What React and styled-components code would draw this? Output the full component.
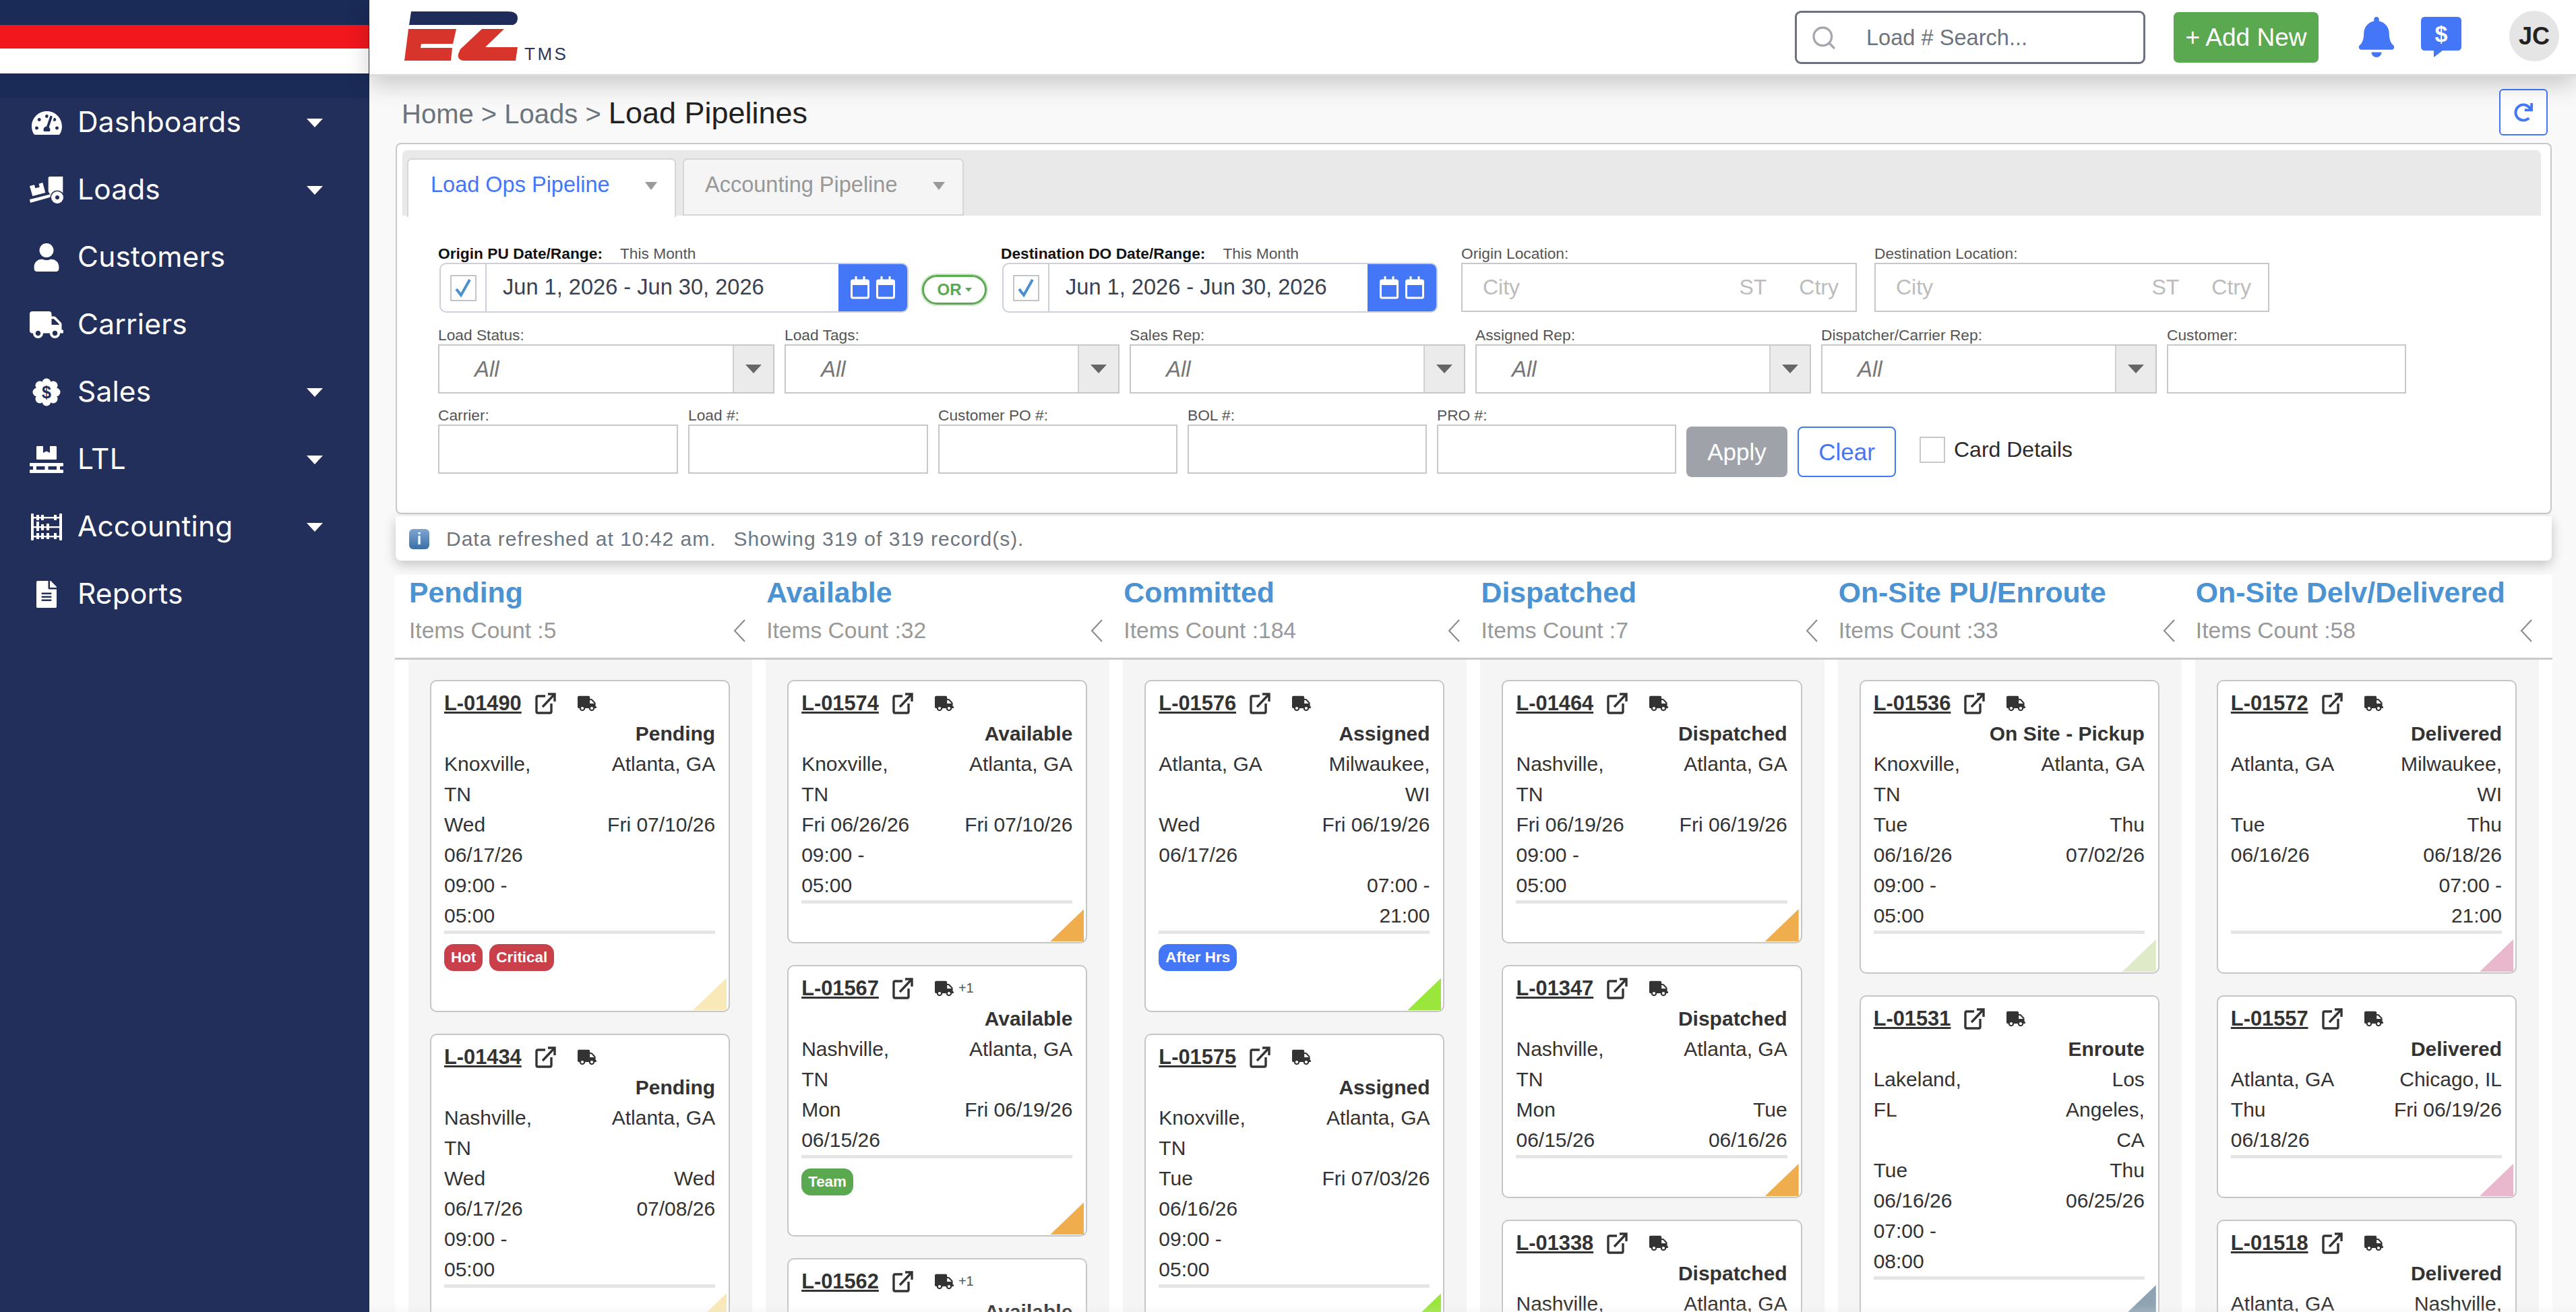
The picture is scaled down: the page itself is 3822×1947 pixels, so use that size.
import React from 'react'
import styled, { createGlobalStyle } from 'styled-components'
import { FaTachometerAlt, FaUser, FaTruck, FaPallet, FaFileAlt, FaBell, FaRedo } from 'react-icons/fa'
import { Search } from 'lucide-react'

const BLUE = '#4477f7'
const SANS = '"Liberation Sans", Arial, sans-serif'

const Global = createGlobalStyle`
  html, body { margin: 0; padding: 0; background: #f9f9f9; }
  * { box-sizing: border-box; }
  body { font-family: ${SANS}; color: #333; }
`

const Shell = styled.div`
  display: grid;
  grid-template-columns: 548px 1fr;
  height: 100vh;
  overflow: hidden;
`

/* ---------- sidebar ---------- */
const Sidebar = styled.aside`
  background: #222f5b;
  color: #fff;
  font-family: Inter, sans-serif;
`
const Brand = styled.div`
  height: 146px;
  padding: 37px 1px 37px 0;
  background: #1a2b57;
`
const RedStripe = styled.div`
  height: 35px;
  background: #f1171d;
`
const WhiteStripe = styled.div`
  height: 37px;
  background: #fff;
`
const Menu = styled.nav`
  display: flex;
  flex-direction: column;
  gap: 28px;
`
const MenuItem = styled.div`
  height: 72px;
  display: flex;
  align-items: center;
  padding-left: 44px;
`
const MenuIcon = styled.span`
  width: 50px;
  height: 50px;
  display: flex;
  align-items: center;
  justify-content: center;
  margin-right: 21px;
`
const MenuLabel = styled.span`
  font-size: 42.4px;
  width: 340px;
  letter-spacing: 0.2px;
  padding-bottom: 4px;
`
const SideCaret = styled.span`
  width: 0;
  height: 0;
  border-left: 12px solid transparent;
  border-right: 12px solid transparent;
  border-top: 13px solid #fff;
`

const DollyIcon = () => (
  <svg width="50" height="40" viewBox="0 0 50 40">
    <path fill="#fff" fillRule="evenodd" d="M0 14L7 12.3L8.3 17.3L14.7 15.7L13.7 10.7L19.3 9L23.3 24L4.3 29Z" />
    <path fill="#fff" d="M0 34L31 26.3L32 30.3L1 39Z" />
    <path fill="#fff" d="M30 0H49.3V30H32L27.7 22V2.3Q27.7 0 30 0Z" />
    <circle cx="41" cy="31" r="10.5" fill="#222f5b" />
    <circle cx="41" cy="31" r="9" fill="#fff" />
    <circle cx="41" cy="31" r="3" fill="#222f5b" />
  </svg>
)

const SalesIcon = () => (
  <svg width="42" height="42" viewBox="0 0 42 42">
    <g fill="#fff">
      <circle cx="21" cy="21" r="15" />
      <circle cx="21" cy="7" r="6.5" />
      <circle cx="21" cy="35" r="6.5" />
      <circle cx="7" cy="21" r="6.5" />
      <circle cx="35" cy="21" r="6.5" />
      <circle cx="11" cy="11" r="6.5" />
      <circle cx="31" cy="11" r="6.5" />
      <circle cx="11" cy="31" r="6.5" />
      <circle cx="31" cy="31" r="6.5" />
    </g>
    <text x="21" y="30" textAnchor="middle" fontSize="25" fontWeight="700" fontFamily={SANS} fill="#222f5b">$</text>
  </svg>
)

const AbacusIcon = () => (
  <svg width="46" height="40" viewBox="0 0 46 40" fill="#fff">
    <rect x="0" y="0" width="4" height="40" rx="1" />
    <rect x="42" y="0" width="4" height="40" rx="1" />
    <rect x="4" y="5" width="38" height="2.4" />
    <rect x="4" y="19" width="38" height="2.4" />
    <rect x="4" y="33" width="38" height="2.4" />
    <rect x="8" y="2" width="4" height="8" />
    <rect x="15" y="2" width="4" height="8" />
    <rect x="8" y="12" width="4" height="14" />
    <rect x="15" y="16" width="4" height="9" />
    <rect x="23" y="15" width="4" height="10" />
    <rect x="34" y="2" width="4" height="8" />
    <rect x="8" y="29" width="4" height="9" />
    <rect x="15" y="29" width="4" height="9" />
    <rect x="23" y="29" width="4" height="9" />
    <rect x="34" y="29" width="4" height="9" />
  </svg>
)

const MENU = [
  { label: 'Dashboards', icon: <FaTachometerAlt size={45} />, caret: true },
  { label: 'Loads', icon: <DollyIcon />, caret: true },
  { label: 'Customers', icon: <FaUser size={42} />, caret: false },
  { label: 'Carriers', icon: <FaTruck size={50} />, caret: false },
  { label: 'Sales', icon: <SalesIcon />, caret: true },
  { label: 'LTL', icon: <FaPallet size={50} />, caret: true },
  { label: 'Accounting', icon: <AbacusIcon />, caret: true },
  { label: 'Reports', icon: <FaFileAlt size={40} />, caret: false },
]

/* ---------- top bar ---------- */
const Main = styled.main`
  min-width: 0;
  display: flex;
  flex-direction: column;
  position: relative;
  background: #f9f9f9;
`
const Topbar = styled.header`
  height: 113px;
  flex: none;
  display: flex;
  align-items: flex-start;
  background: #fff;
  border-bottom: 3px solid #dcdcdc;
  box-shadow: 0 12px 34px rgba(0, 0, 0, 0.2);
  position: relative;
  z-index: 2;
`
const LogoWrap = styled.div`
  display: flex;
  align-items: flex-end;
  gap: 8px;
  margin: 17px 0 0 52px;
  height: 73px;
`
const LogoTms = styled.span`
  font-size: 26px;
  line-height: 20px;
  letter-spacing: 3.5px;
  color: #2a3660;
`
const SearchBox = styled.div`
  margin: 16px 0 0 auto;
  width: 520px;
  height: 79px;
  border: 3px solid #6c717b;
  border-radius: 9px;
  display: flex;
  align-items: center;
  padding-left: 20px;
  gap: 43px;
  font-size: 32.6px;
  color: #6c757d;
`
const AddButton = styled.div`
  margin: 18px 0 0 42px;
  width: 215px;
  height: 75px;
  background: #5aa84f;
  border-radius: 7px;
  color: #fff;
  font-size: 37px;
  display: flex;
  align-items: center;
  justify-content: center;
`
const BellWrap = styled.div`
  margin: 25px 0 0 56px;
  color: ${BLUE};
  height: 60px;
`
const MoneyWrap = styled.div`
  margin: 25px 0 0 36px;
  height: 60px;
`
const Avatar = styled.div`
  margin: 16px 25px 0 71px;
  width: 74px;
  height: 75px;
  border-radius: 50%;
  background: #e5e5e5;
  color: #222;
  font-weight: 700;
  font-size: 36px;
  display: flex;
  align-items: center;
  justify-content: center;
`

/* ---------- breadcrumb ---------- */
const CrumbRow = styled.div`
  flex: none;
  height: 99px;
  padding: 21px 42px 11px 48px;
  display: flex;
  align-items: center;
  justify-content: space-between;
`
const Crumbs = styled.div`
  font-size: 40px;
  color: #6c757d;
`
const CrumbCurrent = styled.span`
  font-size: 45px;
  color: #222;
`
const RefreshButton = styled.div`
  width: 72px;
  height: 69px;
  margin-top: -2px;
  border: 2px solid ${BLUE};
  border-radius: 6px;
  color: ${BLUE};
  background: #fff;
  display: flex;
  align-items: center;
  justify-content: center;
`

/* ---------- filter panel ---------- */
const Panel = styled.section`
  flex: none;
  margin: 0 36px 0 39px;
  height: 551px;
  background: #fff;
  border: 2px solid #c9c9c9;
  border-radius: 8px;
  padding: 9px 14px 0 8px;
`
const TabStrip = styled.div`
  height: 97px;
  background: #e9e9e9;
  border-radius: 7px 7px 0 0;
  padding: 12px 0 0 7px;
  display: flex;
  gap: 10px;
`
const Tab = styled.div`
  height: ${p => (p.$active ? 87 : 85)}px;
  width: ${p => (p.$active ? 399 : 417)}px;
  padding: 19px 26px 0 ${p => (p.$active ? 33 : 31)}px;
  background: ${p => (p.$active ? '#fff' : '#f5f5f5')};
  border: 2px solid #d6d6d6;
  border-bottom: ${p => (p.$active ? 'none' : '2px solid #d6d6d6')};
  border-radius: 7px 7px 0 0;
  font-size: 32.5px;
  color: ${p => (p.$active ? BLUE : '#989898')};
  display: flex;
  justify-content: space-between;
  align-items: flex-start;
`
const TabCaret = styled.span`
  margin-top: 14px;
  width: 0;
  height: 0;
  border-left: 9px solid transparent;
  border-right: 9px solid transparent;
  border-top: 12px solid #9a9a9a;
`
const FilterRow = styled.div`
  display: flex;
  align-items: flex-start;
  gap: ${p => p.$gap ?? 15}px;
  margin-top: ${p => p.$top}px;
  padding-left: 53px;
`
const Field = styled.div`
  width: ${p => p.$w}px;
  flex: none;
  margin-right: ${p => p.$after || 0}px;
`
const FieldLabel = styled.div`
  height: 27px;
  line-height: 27px;
  font-size: 22.75px;
  color: #555;
  white-space: nowrap;
`
const StrongLabel = styled.strong`
  color: #111;
  font-weight: 700;
  margin-right: 26px;
`
const DateBox = styled.div`
  height: 74px;
  margin-left: 2px;
  display: flex;
  border: 2px solid #ccd0d8;
  border-radius: 10px;
  overflow: hidden;
`
const DateCheckCell = styled.div`
  width: 68px;
  flex: none;
  display: flex;
  align-items: center;
  justify-content: center;
  border-right: 2px solid #ccd0d8;
`
const CheckSquare = styled.span`
  width: 39px;
  height: 39px;
  border: 2px solid #c4c4c4;
  display: flex;
  align-items: center;
  justify-content: center;
  background: #fff;
`
const DateText = styled.div`
  flex: 1;
  padding-left: 24px;
  font-size: 32.6px;
  line-height: 68px;
  color: #3a4252;
  white-space: nowrap;
`
const DateButton = styled.div`
  width: 102px;
  flex: none;
  background: ${BLUE};
  display: flex;
  align-items: center;
  justify-content: center;
`
const OrPill = styled.div`
  width: 96px;
  height: 44px;
  flex: none;
  margin: 45px 21px 0 20px;
  border: 3px solid #5aa84f;
  box-shadow: 0 0 0 2px #cfe5cb;
  border-radius: 22px;
  color: #5aa84f;
  font-size: 24px;
  font-weight: 700;
  display: flex;
  align-items: center;
  justify-content: center;
  gap: 5px;
`
const OrCaret = styled.span`
  width: 0;
  height: 0;
  border-left: 5px solid transparent;
  border-right: 5px solid transparent;
  border-top: 6px solid #5aa84f;
`
const InputBox = styled.div`
  height: 73px;
  border: 2px solid #c8c8c8;
  background: #fff;
  display: flex;
  align-items: center;
  font-size: ${p => (p.$select ? 33 : 32)}px;
`
const Placeholder = styled.span`
  color: #bcbcbc;
  flex: ${p => (p.$grow ? 1 : 'none')};
  margin-left: ${p => (p.$grow ? 30 : 48)}px;
`
const LocationEnd = styled.span`
  width: 25px;
  flex: none;
`
const SelectValue = styled.span`
  flex: 1;
  padding-left: 52px;
  font-style: italic;
  color: #777;
`
const SelectArrowCell = styled.span`
  width: 60px;
  height: 100%;
  flex: none;
  background: #ebebeb;
  border-left: 2px solid #d0d0d0;
  display: flex;
  align-items: center;
  justify-content: center;
`
const SelectArrow = styled.span`
  width: 0;
  height: 0;
  border-left: 12px solid transparent;
  border-right: 12px solid transparent;
  border-top: 13px solid #666;
`
const ApplyButton = styled.div`
  margin-top: 30px;
  width: 150px;
  height: 75px;
  border-radius: 8px;
  background: #9fa3a9;
  color: #fff;
  font-size: 35px;
  display: flex;
  align-items: center;
  justify-content: center;
`
const ClearButton = styled.div`
  margin-top: 30px;
  width: 146px;
  height: 75px;
  border-radius: 8px;
  border: 2px solid ${BLUE};
  color: ${BLUE};
  font-size: 35px;
  display: flex;
  align-items: center;
  justify-content: center;
`
const CardToggle = styled.div`
  margin: 45px 0 0 20px;
  display: flex;
  align-items: center;
  gap: 13px;
  font-size: 32px;
  color: #2b2b2b;
`
const EmptyBox = styled.span`
  width: 38px;
  height: 39px;
  border: 2px solid #c8c8c8;
`

/* ---------- status ---------- */
const StatusBar = styled.div`
  flex: none;
  margin: 3px 36px 21px 39px;
  height: 66px;
  background: #fff;
  border-radius: 0 0 8px 8px;
  box-shadow: 0 6px 18px rgba(0, 0, 0, 0.22);
  display: flex;
  align-items: center;
  padding: 2px 0 0 20px;
  gap: 25px;
  font-size: 30px;
  letter-spacing: 1px;
  color: #6d7680;
  position: relative;
`
const InfoIcon = styled.span`
  width: 30px;
  height: 30px;
  border-radius: 6px;
  background: linear-gradient(#7ea6d3, #3c6ea5);
  color: #fff;
  font-size: 23px;
  font-weight: 700;
  display: flex;
  align-items: center;
  justify-content: center;
  letter-spacing: 0;
`
const StatusGap = styled.span`
  margin-left: 26px;
`

/* ---------- board ---------- */
const Board = styled.section`
  flex: 1;
  min-height: 0;
  margin: 0 35px 0 38px;
  background: #fff;
  overflow: hidden;
  position: relative;
  z-index: 1;
`
const HeadRow = styled.div`
  display: grid;
  grid-template-columns: repeat(6, 1fr);
  gap: 20px;
  padding: 0 20px;
  border-bottom: 3px solid #c9c9c9;
  height: 126px;
`
const ColHead = styled.div`
  padding: 1px 0 0 1px;
`
const ColTitle = styled.div`
  font-size: 42.8px;
  line-height: 50px;
  font-weight: 700;
  color: #4b93d3;
  white-space: nowrap;
`
const ColCountRow = styled.div`
  margin-top: 12px;
  display: flex;
  justify-content: space-between;
  align-items: center;
  padding-right: 10px;
  font-size: 33.6px;
  line-height: 40px;
  color: #999;
`
const BodyRow = styled.div`
  display: grid;
  grid-template-columns: repeat(6, 1fr);
  gap: 20px;
  padding: 0 20px;
`
const ColBody = styled.div`
  background: #f5f5f5;
  padding: 30px 33px 0 32px;
  height: 1000px;
  display: flex;
  flex-direction: column;
  gap: 32px;
`
const Card = styled.article`
  position: relative;
  flex: none;
  background: #fff;
  border: 2px solid #c6c6c6;
  border-radius: 10px;
  padding: 10px 20px 0 19px;
  font-size: 30px;
  line-height: 45px;
  color: #333;
`
const CardTop = styled.div`
  height: 45px;
  display: flex;
  align-items: center;
`
const LoadId = styled.a`
  font-weight: 700;
  font-size: 30.8px;
  text-decoration: underline;
  color: #333;
  margin-right: 20px;
`
const TruckWrap = styled.span`
  display: flex;
  align-items: center;
  margin-left: 32px;
  color: #333;
`
const PlusOne = styled.span`
  font-size: 20px;
  color: #555;
  margin-left: 7px;
`
const CardStatus = styled.div`
  text-align: right;
  font-weight: 700;
`
const CardGrid = styled.div`
  display: grid;
  grid-template-columns: 165px 165px;
  justify-content: space-between;
`
const CellRight = styled.div`
  text-align: right;
`
const CardRule = styled.div`
  height: 5px;
  background: #e5e5e5;
`
const CardFoot = styled.div`
  display: flex;
  gap: 10px;
  height: ${p => (p.$tagged ? 114 : 57)}px;
  padding-top: 15px;
  align-items: flex-start;
`
const Tag = styled.span`
  height: 40px;
  padding: 0 10px;
  border-radius: 14px;
  background: ${p => p.$color};
  color: #fff;
  font-size: 22.4px;
  font-weight: 700;
  line-height: 40px;
`
const Corner = styled.span`
  position: absolute;
  right: 3px;
  bottom: 1px;
  width: 50px;
  height: 48px;
  background: ${p => p.$color};
  clip-path: polygon(100% 0, 100% 100%, 0 100%);
`
const BottomFade = styled.div`
  position: absolute;
  left: 0;
  right: 0;
  bottom: 0;
  height: 44px;
  background: linear-gradient(rgba(225, 225, 225, 0), rgba(225, 225, 225, 0.65));
  z-index: 3;
  pointer-events: none;
`

/* ---------- drawings ---------- */
const Logo = () => (
  <svg width="170" height="73" viewBox="0 0 170 73">
    <path d="M10 0H153Q168 0 168 10Q168 18 161 20H7Z" fill="#1f2c5a" />
    <path d="M6 26H77L72 48H25L24 54H71L69 73H0Z" fill="#d7352b" />
    <path d="M115 26H148L120 53H168L165 73H90Q78 73 80 63L83 56Z" fill="#d7352b" />
  </svg>
)

const MoneyChat = () => (
  <svg width="60" height="60" viewBox="0 0 60 60">
    <path d="M6 0H54Q60 0 60 6V44Q60 50 54 50H32L19 60V50H6Q0 50 0 44V6Q0 0 6 0Z" fill={BLUE} />
    <text x="30" y="37" textAnchor="middle" fontSize="34" fontWeight="700" fontFamily={SANS} fill="#fff">$</text>
  </svg>
)

const CheckMark = () => (
  <svg width="26" height="30" viewBox="0 0 26 30">
    <path d="M3 17L10 26L23 3" fill="none" stroke="#4a90d0" strokeWidth="4" />
  </svg>
)

const Calendars = () => (
  <svg width="66" height="34" viewBox="0 0 66 34" fill="none" stroke="#fff" strokeWidth="3">
    <rect x="1.5" y="6" width="25" height="26" rx="2" />
    <rect x="39.5" y="6" width="25" height="26" rx="2" />
    <path d="M2 10H26M40 10H64" strokeWidth="6" />
    <path d="M8 0V6M20 0V6M46 0V6M58 0V6" />
  </svg>
)

const ExternalLink = () => (
  <svg width="31" height="32" viewBox="0 0 31 32" fill="none" stroke="#333" strokeWidth="3.4">
    <path d="M15 5H4Q2 5 2 7V28Q2 30 4 30H22Q24 30 24 28V16" />
    <path d="M11 21L28 3" />
    <path d="M19 2H29V13" />
  </svg>
)

const Chevron = () => (
  <svg width="18" height="34" viewBox="0 0 18 34" fill="none" stroke="#888" strokeWidth="2">
    <path d="M17 1L2 17L17 33" />
  </svg>
)

/* ---------- data ---------- */
const YELLOW = '#f9e9b8'
const ORANGE = '#f0ad4e'
const LIME = '#9be63c'
const SAGE = '#dfeac8'
const SLATE = '#8fa3b3'
const PINK = '#eab8cc'
const RED = '#c9404a'

const COLUMNS = [
  {
    title: 'Pending', count: 5,
    cards: [
      { id: 'L-01490', status: 'Pending', corner: YELLOW, tags: [['Hot', RED], ['Critical', RED]],
        rows: [['Knoxville, TN', 'Atlanta, GA'], ['Wed 06/17/26', 'Fri 07/10/26'], ['09:00 - 05:00', '']] },
      { id: 'L-01434', status: 'Pending', corner: YELLOW,
        rows: [['Nashville, TN', 'Atlanta, GA'], ['Wed 06/17/26', 'Wed 07/08/26'], ['09:00 - 05:00', '']] },
    ],
  },
  {
    title: 'Available', count: 32,
    cards: [
      { id: 'L-01574', status: 'Available', corner: ORANGE,
        rows: [['Knoxville, TN', 'Atlanta, GA'], ['Fri 06/26/26', 'Fri 07/10/26'], ['09:00 - 05:00', '']] },
      { id: 'L-01567', plus: true, status: 'Available', corner: ORANGE, tags: [['Team', '#5aa84f']],
        rows: [['Nashville, TN', 'Atlanta, GA'], ['Mon 06/15/26', 'Fri 06/19/26']] },
      { id: 'L-01562', plus: true, status: 'Available', corner: ORANGE,
        rows: [['Nashville, TN', 'Atlanta, GA']] },
    ],
  },
  {
    title: 'Committed', count: 184,
    cards: [
      { id: 'L-01576', status: 'Assigned', corner: LIME, tags: [['After Hrs', BLUE]],
        rows: [['Atlanta, GA', 'Milwaukee, WI'], ['Wed 06/17/26', 'Fri 06/19/26'], ['', '07:00 - 21:00']] },
      { id: 'L-01575', status: 'Assigned', corner: LIME,
        rows: [['Knoxville, TN', 'Atlanta, GA'], ['Tue 06/16/26', 'Fri 07/03/26'], ['09:00 - 05:00', '']] },
    ],
  },
  {
    title: 'Dispatched', count: 7,
    cards: [
      { id: 'L-01464', status: 'Dispatched', corner: ORANGE,
        rows: [['Nashville, TN', 'Atlanta, GA'], ['Fri 06/19/26', 'Fri 06/19/26'], ['09:00 - 05:00', '']] },
      { id: 'L-01347', status: 'Dispatched', corner: ORANGE,
        rows: [['Nashville, TN', 'Atlanta, GA'], ['Mon 06/15/26', 'Tue 06/16/26']] },
      { id: 'L-01338', status: 'Dispatched', corner: ORANGE,
        rows: [['Nashville, TN', 'Atlanta, GA']] },
    ],
  },
  {
    title: 'On-Site PU/Enroute', count: 33,
    cards: [
      { id: 'L-01536', status: 'On Site - Pickup', corner: SAGE,
        rows: [['Knoxville, TN', 'Atlanta, GA'], ['Tue 06/16/26', 'Thu 07/02/26'], ['09:00 - 05:00', '']] },
      { id: 'L-01531', status: 'Enroute', corner: SLATE,
        rows: [['Lakeland, FL', 'Los Angeles, CA'], ['Tue 06/16/26', 'Thu 06/25/26'], ['07:00 - 08:00', '']] },
    ],
  },
  {
    title: 'On-Site Delv/Delivered', count: 58,
    cards: [
      { id: 'L-01572', status: 'Delivered', corner: PINK,
        rows: [['Atlanta, GA', 'Milwaukee, WI'], ['Tue 06/16/26', 'Thu 06/18/26'], ['', '07:00 - 21:00']] },
      { id: 'L-01557', status: 'Delivered', corner: PINK,
        rows: [['Atlanta, GA', 'Chicago, IL'], ['Thu 06/18/26', 'Fri 06/19/26']] },
      { id: 'L-01518', status: 'Delivered', corner: PINK,
        rows: [['Atlanta, GA', 'Nashville, TN']] },
    ],
  },
]

const LoadCard = ({ card }) => (
  <Card>
    <CardTop>
      <LoadId>{card.id}</LoadId>
      <ExternalLink />
      <TruckWrap>
        <FaTruck size={28} />
        {card.plus && <PlusOne>+1</PlusOne>}
      </TruckWrap>
    </CardTop>
    <CardStatus>{card.status}</CardStatus>
    <CardGrid>
      {card.rows.map((row, i) => (
        <React.Fragment key={i}>
          <div>{row[0]}</div>
          <CellRight>{row[1]}</CellRight>
        </React.Fragment>
      ))}
    </CardGrid>
    <CardRule />
    <CardFoot $tagged={!!card.tags}>
      {card.tags && card.tags.map(t => <Tag key={t[0]} $color={t[1]}>{t[0]}</Tag>)}
    </CardFoot>
    <Corner $color={card.corner} />
  </Card>
)

const SelectField = ({ label, w }) => (
  <Field $w={w}>
    <FieldLabel>{label}</FieldLabel>
    <InputBox $select>
      <SelectValue>All</SelectValue>
      <SelectArrowCell><SelectArrow /></SelectArrowCell>
    </InputBox>
  </Field>
)

const TextField = ({ label, w }) => (
  <Field $w={w}>
    <FieldLabel>{label}</FieldLabel>
    <InputBox />
  </Field>
)

const LocationField = ({ label, w, after }) => (
  <Field $w={w} $after={after}>
    <FieldLabel>{label}</FieldLabel>
    <InputBox>
      <Placeholder $grow>City</Placeholder>
      <Placeholder>ST</Placeholder>
      <Placeholder>Ctry</Placeholder>
      <LocationEnd />
    </InputBox>
  </Field>
)

const DateField = ({ label, w, after }) => (
  <Field $w={w} $after={after}>
    <FieldLabel><StrongLabel>{label}</StrongLabel>This Month</FieldLabel>
    <DateBox>
      <DateCheckCell><CheckSquare><CheckMark /></CheckSquare></DateCheckCell>
      <DateText>Jun 1, 2026 - Jun 30, 2026</DateText>
      <DateButton><Calendars /></DateButton>
    </DateBox>
  </Field>
)

const App = () => (
  <Shell>
    <Global />
    <Sidebar>
      <Brand>
        <RedStripe />
        <WhiteStripe />
      </Brand>
      <Menu>
        {MENU.map(m => (
          <MenuItem key={m.label}>
            <MenuIcon>{m.icon}</MenuIcon>
            <MenuLabel>{m.label}</MenuLabel>
            {m.caret && <SideCaret />}
          </MenuItem>
        ))}
      </Menu>
    </Sidebar>
    <Main>
      <Topbar>
        <LogoWrap>
          <Logo />
          <LogoTms>TMS</LogoTms>
        </LogoWrap>
        <SearchBox>
          <Search size={40} color="#a5a8ad" strokeWidth={2} />
          Load # Search...
        </SearchBox>
        <AddButton>+ Add New</AddButton>
        <BellWrap><FaBell size={60} /></BellWrap>
        <MoneyWrap><MoneyChat /></MoneyWrap>
        <Avatar>JC</Avatar>
      </Topbar>
      <CrumbRow>
        <Crumbs>Home &gt; Loads &gt; <CrumbCurrent>Load Pipelines</CrumbCurrent></Crumbs>
        <RefreshButton><FaRedo size={28} /></RefreshButton>
      </CrumbRow>
      <Panel>
        <TabStrip>
          <Tab $active>Load Ops Pipeline<TabCaret /></Tab>
          <Tab>Accounting Pipeline<TabCaret /></Tab>
        </TabStrip>
        <FilterRow $top={43} $gap={0}>
          <DateField label="Origin PU Date/Range:" w={698} />
          <OrPill>OR<OrCaret /></OrPill>
          <DateField label="Destination DO Date/Range:" w={648} after={35} />
          <LocationField label="Origin Location:" w={587} after={26} />
          <LocationField label="Destination Location:" w={586} />
        </FilterRow>
        <FilterRow $top={20}>
          <SelectField label="Load Status:" w={499} />
          <SelectField label="Load Tags:" w={497} />
          <SelectField label="Sales Rep:" w={498} />
          <SelectField label="Assigned Rep:" w={498} />
          <SelectField label="Dispatcher/Carrier Rep:" w={498} />
          <TextField label="Customer:" w={355} />
        </FilterRow>
        <FilterRow $top={19}>
          <TextField label="Carrier:" w={356} />
          <TextField label="Load #:" w={356} />
          <TextField label="Customer PO #:" w={355} />
          <TextField label="BOL #:" w={355} />
          <TextField label="PRO #:" w={355} />
          <ApplyButton>Apply</ApplyButton>
          <ClearButton>Clear</ClearButton>
          <CardToggle><EmptyBox />Card Details</CardToggle>
        </FilterRow>
      </Panel>
      <StatusBar>
        <InfoIcon>i</InfoIcon>
        <span>Data refreshed at 10:42 am.<StatusGap>Showing 319 of 319 record(s).</StatusGap></span>
      </StatusBar>
      <Board>
        <HeadRow>
          {COLUMNS.map(c => (
            <ColHead key={c.title}>
              <ColTitle>{c.title}</ColTitle>
              <ColCountRow>Items Count :{c.count}<Chevron /></ColCountRow>
            </ColHead>
          ))}
        </HeadRow>
        <BodyRow>
          {COLUMNS.map(c => (
            <ColBody key={c.title}>
              {c.cards.map(card => <LoadCard key={card.id} card={card} />)}
            </ColBody>
          ))}
        </BodyRow>
      </Board>
      <BottomFade />
    </Main>
  </Shell>
)

export default App
